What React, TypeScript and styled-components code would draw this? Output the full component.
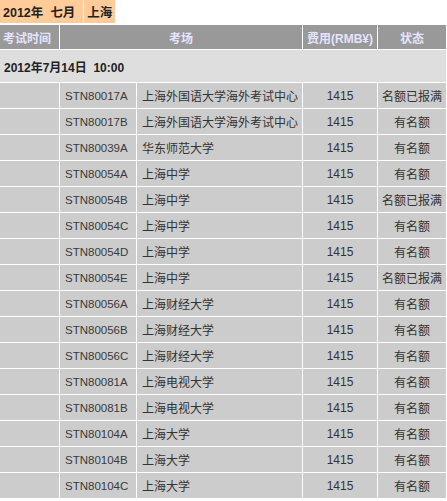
import { createGlobalStyle } from 'styled-components'
import styled from 'styled-components'

const GlobalStyle = createGlobalStyle`
  html, body {
    margin: 0;
    padding: 0;
    background: #fff;
    font-family: 'Liberation Sans', Arial, 'Noto Sans CJK SC', sans-serif;
  }
`

const Page = styled.div`
  width: 447px;
`

const TabBar = styled.div`
  display: flex;
  gap: 1px;
  height: 23px;
  margin-bottom: 2px;
`

const Tab = styled.div<{ $right: number }>`
  display: flex;
  align-items: center;
  padding: 0 ${(p) => p.$right}px 0 3px;
  background: #ffcc99;
  color: #222;
  font-size: 12.5px;
  font-weight: bold;
  white-space: pre;
`

const Table = styled.table`
  width: 447px;
  border-collapse: separate;
  border-spacing: 0;
  table-layout: fixed;
  font-size: 12px;
`

const HeadCell = styled.th<{ $align?: string }>`
  height: 24px;
  padding: 0 ${(p) => (p.$align === 'left' ? 3 : 0)}px;
  background: #999999;
  color: #e4e4ff;
  font-weight: bold;
  text-align: ${(p) => p.$align || 'center'};
  border-right: 1px solid #fff;
  border-bottom: 1px solid #fff;
  white-space: nowrap;
  overflow: hidden;
`

const DateCell = styled.td`
  height: 32px;
  padding: 0 4px;
  background: #dedede;
  color: #222;
  font-weight: bold;
  border-right: 1px solid #fff;
  border-bottom: 1px solid #fff;
  white-space: pre;
`

const Cell = styled.td<{ $align?: string }>`
  height: 25px;
  padding: 0 ${(p) => (p.$align === 'center' ? 0 : 5)}px;
  background: #cccccc;
  color: #333;
  text-align: ${(p) => p.$align || 'left'};
  border-right: 1px solid #fff;
  border-bottom: 1px solid #fff;
  white-space: nowrap;
  overflow: hidden;
`

const Code = styled.span`
  font-size: 11.5px;
  color: #3a3a3a;
`

type Row = { code: string; venue: string; full?: boolean }

const rows: Row[] = [
  { code: 'STN80017A', venue: '上海外国语大学海外考试中心', full: true },
  { code: 'STN80017B', venue: '上海外国语大学海外考试中心' },
  { code: 'STN80039A', venue: '华东师范大学' },
  { code: 'STN80054A', venue: '上海中学' },
  { code: 'STN80054B', venue: '上海中学', full: true },
  { code: 'STN80054C', venue: '上海中学' },
  { code: 'STN80054D', venue: '上海中学' },
  { code: 'STN80054E', venue: '上海中学', full: true },
  { code: 'STN80056A', venue: '上海财经大学' },
  { code: 'STN80056B', venue: '上海财经大学' },
  { code: 'STN80056C', venue: '上海财经大学' },
  { code: 'STN80081A', venue: '上海电视大学' },
  { code: 'STN80081B', venue: '上海电视大学' },
  { code: 'STN80104A', venue: '上海大学' },
  { code: 'STN80104B', venue: '上海大学' },
  { code: 'STN80104C', venue: '上海大学' },
]

export default function App() {
  return (
    <Page>
      <GlobalStyle />
      <TabBar>
        <Tab $right={8}>2012年  七月</Tab>
        <Tab $right={3}>上海</Tab>
      </TabBar>
      <Table>
        <colgroup>
          <col style={{ width: 60 }} />
          <col style={{ width: 77 }} />
          <col style={{ width: 166 }} />
          <col style={{ width: 75 }} />
          <col style={{ width: 69 }} />
        </colgroup>
        <thead>
          <tr>
            <HeadCell $align="left">考试时间</HeadCell>
            <HeadCell colSpan={2}>考场</HeadCell>
            <HeadCell>费用(RMB¥)</HeadCell>
            <HeadCell>状态</HeadCell>
          </tr>
        </thead>
        <tbody>
          <tr>
            <DateCell colSpan={5}>2012年7月14日  10:00</DateCell>
          </tr>
          {rows.map((r) => (
            <tr key={r.code}>
              <Cell />
              <Cell>
                <Code>{r.code}</Code>
              </Cell>
              <Cell>{r.venue}</Cell>
              <Cell $align="center">1415</Cell>
              <Cell $align="center">{r.full ? '名额已报满' : '有名额'}</Cell>
            </tr>
          ))}
        </tbody>
      </Table>
    </Page>
  )
}
